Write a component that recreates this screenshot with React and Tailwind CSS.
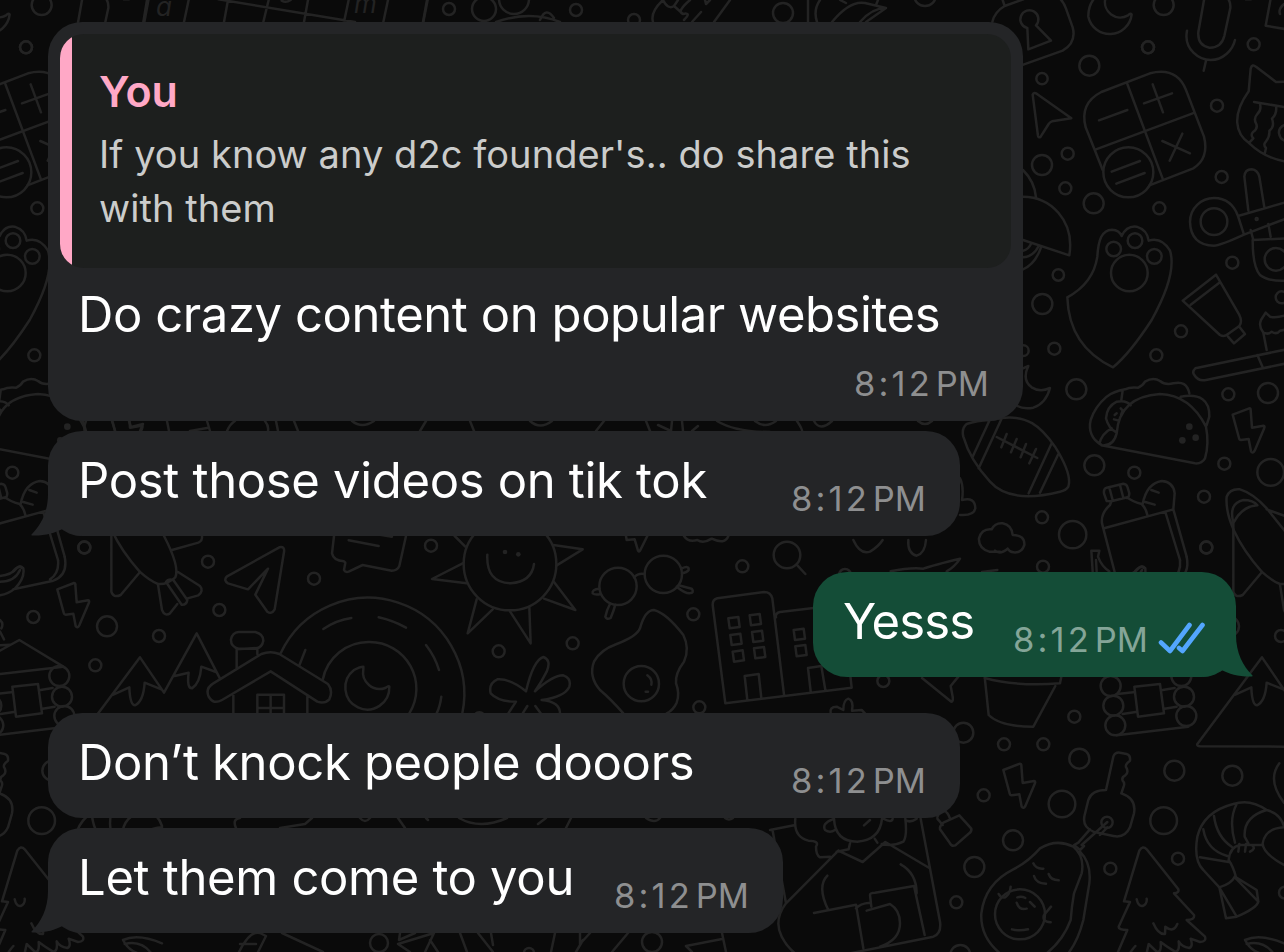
import clsx from 'clsx';

// Wallpaper repeats horizontally every 1122px
const TILE = 1122;

// Each sheet is a block of line drawings on a 3x grid, placed at (x, y)
const sheets = [
  {
    x: 0,
    y: 0,
    circles: [[78, 142, 18]],
    paths: [
      'M566 0L552 66M684 0L672 66M806 0L790 66M924 0L912 66M1046 0L1032 66M1164 0L1150 66M1283 0L1270 66M655 -2L1065 66',
      'M845 2Q858 10 872 0M372 -2L386 -2',
    ],
  },
  {
    x: 960,
    y: 0,
    circles: [
      [611, 15, 30], [564, 142, 18], [388, 197, 30], [246, 236, 17], [881, 133, 18], [771, 317, 18],
      [323, 461, 18], [246, 495, 30], [316, 565, 18], [401, 610, 30], [598, 625, 18], [785, 531, 18],
      [295, 825, 17], [247, 912, 30], [817, 788, 18], [965, 892, 18],
      // calculator, paw and wrench
      [505, 517, 75], [525, 722, 22], [461, 747, 22], [583, 769, 22], [508, 819, 55], [762, 665, 40], [948, 778, 34], [890, 657, 3],
    ],
    paths: [
      'M97 66Q104 35 134 18L190 -2M134 18L128 0M300 -4Q312 8 318 26L338 82Q350 128 308 152L190 194',
      'M202 84L205 148L273 122L228 76M202 84A27 27 0 1 1 228 76',
      'M402 -4Q384 20 385 50A66 66 0 0 0 515 44Q514 38 504 46A46 46 0 0 1 436 -4',
      'M732 0L715 96Q712 136 748 143Q784 144 793 108L811 24Q812 6 804 -4M681 92C670 150 720 180 752 180C790 180 818 150 825 120M738 182L731 212',
      'M932 -4L917 77L980 88',
      'M218 284Q222 276 230 281L334 355L276 364Q270 366 266 372L242 410Q236 415 234 408Z',
      'M428 510L377 382Q358 310 424 276L570 220Q650 200 678 270L732 410Q748 475 700 505L568 556M502 252L608 536M408 448L698 340M417 361L502 330M552 310L636 280M578 253L609 337M607 423L690 460M667 401L629 482M455 515L540 483M469 551L554 519',
      'M189 510Q224 545 228 592M189 590C270 590 345 660 328 766L189 720M243 742Q226 792 189 808M214 730Q205 750 189 752M236 738Q220 770 189 772',
      'M322 892Q400 850 412 770C415 720 425 690 456 689Q478 690 485 708Q500 676 530 680Q562 690 566 722Q605 710 630 752C645 800 625 870 575 960Q510 1060 459 1102C370 1060 325 990 322 892',
      'M980 245L948 246L888 200Q876 190 872 206L866 274C815 345 825 400 868 430Q915 475 980 485M882 306L980 322M900 312Q905 330 892 342Q880 355 888 370Q895 385 880 395Q870 405 880 415L868 428M948 318Q952 340 936 356Q945 380 928 392Q930 410 918 424Q908 435 918 444L914 462M980 372Q955 380 957 400Q960 420 980 424',
      'M865 632L853 530Q855 508 875 508Q893 510 898 530L913 622M980 606L834 648L852 704L980 655M834 648Q815 595 762 594A72 72 0 0 0 690 665Q692 735 762 737Q780 737 852 704M925 672L932 710M872 690L880 720L980 715M878 720Q878 800 900 825Q925 845 980 842',
      'M668 902L768 824L838 945Q848 965 838 978L803 1003Q792 1012 780 1005ZM692 914L778 848M804 1010L822 1030L855 1002L838 980',
    ],
  },
  {
    x: 960,
    y: 300,
    circles: [
      [663, 94, 18], [283, 146, 18], [190, 152, 16], [589, 166, 18], [349, 268, 30], [805, 283, 18],
      [924, 279, 30], [403, 496, 30], [523, 518, 18], [793, 491, 18], [932, 517, 40], [732, 590, 18],
      [246, 652, 18], [338, 704, 41], [739, 743, 18], [249, 800, 18],
    ],
    dots: [[688, 380, 10], [667, 421, 10], [707, 413, 10]],
    paths: [
      'M980 148L706 205Q695 215 703 225Q715 245 738 240L980 190M892 165L908 202M920 150L910 98Q895 80 903 60L917 38L930 50Q950 55 980 45M910 98Q925 105 935 95Q950 105 960 92L980 88',
      'M189 205L205 198Q185 240 215 262Q240 278 270 264Q258 310 220 323Q190 328 172 318',
      'M90 360L124 354C200 345 240 375 285 440C310 480 335 530 325 560Q318 572 300 575C200 600 130 590 90 545Q30 480 10 410Q4 385 20 372Q50 362 90 360M88 362L38 470M124 358L56 505M274 432L206 580M294 464L240 578M110 411L232 474M140 402L124 442M170 417L153 457M198 432L182 472M228 447L208 490',
      'M424 434C395 420 385 390 392 360Q405 320 440 290Q460 275 495 268Q510 260 535 263Q550 255 555 245Q580 230 600 243Q615 256 640 250Q680 240 688 280M488 272L484 300M470 400Q478 290 600 282Q690 285 738 380Q748 430 735 475Q725 492 705 490L424 436Q460 440 470 400M662 290Q750 275 748 350L740 375M512 316Q500 300 470 305Q440 320 438 355Q445 385 470 398M455 385Q425 400 418 432M464 345L470 340M482 325L488 332L483 345M462 358L476 362',
      'M818 344L868 325Q872 325 872 330L876 383L910 377Q916 378 912 386L884 452Q878 462 873 454L866 417L843 420Q838 420 837 414Z',
      'M120 755Q100 755 88 755Q55 745 57 715Q65 685 95 688Q105 668 128 670Q155 675 158 705Q195 705 193 735Q185 760 160 757Q150 757 143 746Q120 765 105 752',
      'M464 816L426 670Q422 640 450 615L454 604L502 592Q515 604 545 612Q558 625 562 645M435 684L640 628M454 604L440 603L432 580Q430 566 440 563L490 551Q500 552 502 560L508 580Q508 592 500 594M448 563L458 600M480 555L490 594M548 612Q560 550 605 543Q640 545 644 580L640 628L680 770M616 636L660 780M574 570L596 578M556 606L584 614',
      'M394 752L418 752L414 770Q425 800 448 814M394 752L398 814M408 780L410 814M525 814Q540 795 552 804',
      'M0 535Q12 560 6 600M6 600Q45 590 46 625Q42 648 0 645M66 816L112 810',
      'M800 590Q810 565 840 568Q880 580 920 625L980 700M800 590C795 650 830 730 905 815M820 668Q805 610 850 600Q880 600 892 616Q845 620 822 666M920 628L980 650',
    ],
  },
  {
    x: 0,
    y: 520,
    circles: [
      [253, 82, 18], [624, 125, 18], [942, 176, 18], [100, 291, 18], [658, 270, 18], [321, 319, 30],
      [477, 348, 18], [286, 436, 18],
    ],
    paths: [
      'M174 120Q178 160 150 178M194 110Q205 165 160 182L40 208M0 168Q35 165 50 145Q60 132 70 145Q75 175 45 205Q25 222 0 226M0 185Q45 185 60 150',
      'M172 208L222 189Q226 189 226 194L230 247L264 241Q270 242 266 250L238 316Q232 326 227 318L220 281L197 284Q192 284 191 278Z',
      'M334 8L334 215Q340 235 362 225L420 156M419 155Q450 183 474 192Q500 195 526 172Q540 140 492 48M516 90L595 68Q608 62 606 48M474 194L486 270Q494 290 510 280L532 252M534 156L600 198Q612 212 595 226L560 236M498 186Q505 175 520 180L562 240Q560 255 545 254Z',
      'M680 170L838 82Q855 78 852 96L824 268Q815 284 802 275L766 224L804 146L744 208L684 190Q670 182 680 170',
      'M1002 48L996 100Q1000 122 1032 124L1036 128L1032 150Q1036 158 1046 155L1088 135L1175 152Q1192 152 1198 138L1218 48M1046 61L1136 78M1140 44L1176 50',
      'M842 400A289 289 0 0 1 1387 580M968 480A140 140 0 0 1 1108 366A140 140 0 0 1 1228 580M970 327Q1010 300 1054 294M1136 292Q1180 302 1218 323M916 390L898 436M1278 375Q1305 410 1317 450M1324 530Q1320 560 1310 580',
      'M1090 440Q1080 440 1062 450A66 66 0 1 0 1168 500Q1166 496 1156 504A50 50 0 0 1 1090 448Z',
      'M666 540Q640 555 626 530Q615 505 640 490L784 402Q812 392 838 402L984 492Q1000 512 988 538Q975 552 952 545L812 454ZM700 525L700 580M922 530L922 580M710 445L710 388L772 384L772 402M716 386Q692 380 693 358Q697 338 716 336L766 336Q790 342 790 362Q786 384 766 386ZM772 580L772 524L852 524L852 580M812 524L812 580M772 564L852 564',
      'M500 680L234 679Q224 678 226 672L420 412L492 518L590 340L660 476M340 524L388 502Q390 555 405 556Q430 545 434 488L484 508M524 468L566 458Q560 505 576 505Q600 490 604 440L648 456',
      'M-60 425L58 360L190 440M0 462L190 440M0 376L30 374M0 300Q12 310 4 325M0 335L12 358',
    ],
  },
  {
    x: 410,
    y: 520,
    circles: [
      [63, 77, 18], [997, 139, 18], [850, 283, 18], [266, 394, 18], [488, 370, 18], [868, 562, 18],
      [300, 132, 139], [1131, 105, 40], [624, 199, 56], [760, 163, 56], [694, 491, 53], [208, 595, 18],
    ],
    dots: [[285, 96, 7], [325, 103, 7]],
    paths: [
      'M134 48L166 80M430 75L518 88L440 136M158 130L66 177L170 190M432 186L496 270L402 236M200 238L173 340L248 268M300 274L362 370L358 262M232 104Q228 188 302 190Q365 185 372 132',
      'M648 48L650 60L674 58L684 92Q687 98 692 88L712 48M822 48Q835 68 862 60Q880 72 905 56Q945 75 955 48M1160 134L1186 162',
      'M672 172Q685 158 704 162M814 146Q838 135 836 150Q830 158 816 160M806 196L845 206Q855 218 838 220Q825 220 800 200M568 206Q545 208 548 220Q555 226 572 222M600 252Q590 270 586 290Q590 300 602 294Q612 270 616 254',
      'M640 580Q600 535 570 510Q535 470 552 425Q570 390 620 372Q680 350 690 325Q705 270 732 270Q770 280 820 345Q840 385 822 425Q795 460 798 490Q810 520 800 548Q790 570 770 580M712 466Q728 478 724 494M707 515L714 515',
      'M348 514Q370 420 400 411Q425 420 410 455Q395 485 375 514Q430 465 460 466Q485 475 478 500Q465 530 395 540Q450 545 450 580M348 514Q300 475 262 478Q235 490 242 520Q265 545 318 545L295 580M352 558L338 580M376 558L392 580',
      'M946 550L908 255Q908 238 922 235L1062 216Q1082 216 1087 235L1122 524M946 550L1325 503L1318 440M1098 292Q1095 280 1110 276L1230 262M1012 540L1004 468L1046 462L1054 534M1202 514L1194 444L1234 438L1246 510',
      'M955 295L985 291L989 321L959 325ZM1019 286L1049 282L1053 312L1023 316ZM961 345L991 341L995 371L965 375ZM1026 336L1056 332L1060 362L1030 366ZM968 395L998 391L1002 421L972 425ZM1032 385L1062 381L1066 411L1036 415ZM1151 330L1181 326L1185 356L1155 360ZM1156 379L1186 375L1190 405L1160 409Z',
    ],
  },
  {
    x: 800,
    y: 540,
    circles: [
      [135, 105, 18], [250, 423, 18], [823, 530, 18], [612, 613, 18], [730, 613, 18], [490, 578, 30],
      [932, 438, 30], [940, 497, 30], [946, 556, 30], [1144, 408, 30], [1152, 470, 30], [1159, 528, 30],
    ],
    paths: [
      'M160 0Q180 45 210 35Q235 20 248 0M325 0Q322 40 350 47Q375 40 378 0M272 94Q330 82 370 86Q400 75 480 56Q465 80 440 94',
      'M952 462L1000 457M1088 450L1124 444M968 522L1012 515M1094 506L1130 500M950 586L1165 560M1003 440L1080 432L1092 520L1014 530Z',
      'M366 414L454 485Q460 485 458 470L452 438L475 410M554 410L566 525Q600 560 700 560L766 438M554 414Q650 440 780 430L784 410',
      'M92 520Q88 500 110 500L130 510Q130 480 145 476Q162 482 156 512L185 510L195 520',
    ],
  },
  {
    x: 770,
    y: 740,
    circles: [
      [928, 56, 30], [641, 166, 18], [876, 192, 40], [1213, 92, 30], [1387, 107, 30], [1181, 242, 40],
      [729, 301, 30], [613, 381, 30], [559, 487, 18], [1021, 386, 18], [1224, 356, 18], [571, 645, 30],
      [1545, 458, 18], [1011, 247, 17], [750, 523, 75],
    ],
    paths: [
      'M700 90L750 71Q754 71 754 76L758 129L792 123Q798 124 794 132L766 198Q760 208 755 200L748 163L725 166Q720 166 719 160Z',
      'M1008 150L1030 50Q1035 36 1050 38L1070 42Q1082 46 1080 62Q1062 75 1070 85Q1076 98 1066 106Q1054 112 1058 122Q1066 130 1060 142L1054 160Q1100 175 1092 220L1080 262Q1065 295 1030 288L970 275Q935 260 944 225L955 180Q965 150 1008 150M1012 246L935 315M960 268L925 308L912 315L930 330L942 318M1012 262L990 285',
      'M690 640Q630 590 634 520Q645 430 730 388Q775 365 810 325Q860 295 910 320Q945 350 935 400L912 460Q905 500 902 540Q880 600 830 640M930 335Q965 370 958 430L940 540Q925 600 895 640M790 370Q798 388 820 386M792 408Q798 430 828 431M836 402Q842 420 866 421M686 462Q692 475 706 472Q720 462 722 440M742 472Q755 468 766 474M740 488Q748 512 770 506M780 486L794 500M843 500L822 525Q815 545 842 547M726 568Q748 574 774 568',
      'M1062 484L1108 332Q1118 315 1130 328L1224 446Q1230 458 1212 460L1272 525Q1275 540 1250 540L1305 590Q1310 605 1290 606L1262 596Q1270 620 1258 624Q1235 620 1226 604Q1230 635 1215 635Q1190 620 1172 606Q1175 640 1160 635L1136 612L1130 640M1096 618Q1085 630 1080 640M1062 484L1080 486L1046 560Q1045 570 1072 570L1044 636M1100 478Q1105 500 1118 498Q1132 492 1130 476M1150 550Q1165 585 1185 582L1186 560Q1210 580 1222 552',
      'M1542 258Q1530 220 1490 210Q1440 175 1390 192Q1300 215 1282 290Q1270 360 1300 390L1348 442L1368 535L1400 530Q1460 505 1465 485L1460 450L1398 412Q1390 380 1376 360Q1380 320 1410 315L1478 315M1542 375Q1478 340 1478 310Q1485 265 1542 262M1290 352L1376 366M1348 442Q1385 430 1394 410M1350 446L1400 530M1396 414L1465 485M1300 268Q1310 330 1372 348M1332 228Q1340 290 1385 320M1400 192Q1375 240 1395 308M1490 210Q1420 230 1424 290L1435 310M1408 312L1405 335M1428 312L1425 335M1445 315Q1460 325 1440 335M1528 70Q1490 120 1542 188',
      'M1425 600Q1470 580 1542 610M1425 600Q1440 630 1470 640M1430 612Q1480 600 1510 640',
      'M76 236Q70 290 115 302Q150 302 138 320Q138 345 150 352L180 350M188 238Q155 250 165 270Q180 280 195 270M192 236Q195 305 262 305Q330 300 336 236M340 236Q365 250 368 236M406 236Q412 290 400 305Q370 320 335 312M300 240L282 256M240 310L236 328L200 335M314 296L322 308M406 240Q420 250 440 236M205 332L278 366L346 306L478 384M205 332L48 490Q10 540 35 590Q50 620 75 640M452 236L510 545Q515 580 490 590L240 640M172 407Q140 440 175 510M132 519L258 494L280 625M258 505Q270 490 300 488M304 500L300 465Q300 458 315 458L432 438L464 585M392 373Q440 400 440 460M290 512L360 492Q390 510 390 550Q390 600 330 620M0 270L76 255M8 272L48 490',
      'M502 232Q505 215 522 212Q535 218 540 236M502 236L518 255M510 268Q508 258 520 248L568 226L604 266Q606 275 595 282L556 316Q545 320 540 310Z',
    ],
  },
];

// Slivers that show between the bubbles, in page pixels
const slivers = [
  'M427 0L423 22M496 22Q530 10 560 22M540 20Q546 6 554 18M663 0Q650 12 653 22M663 0Q668 10 674 6L678 0M674 6L683 14M690 0Q676 12 683 14Q692 12 684 20M701 12L692 22M705 0L706 4L710 0M730 0L714 22M808 0L808 22M820 0Q813 10 817 22M840 0L846 3M832 22Q850 0 865 3L886 8L866 22M886 8Q872 8 860 22M876 5L878 0',
  'M147 0L143 24M1284 4Q1278 9 1280 14',
  'M83 421L86 431M112 421L115 431M129 421L131 427L143 424L140 431M167 421L169 431M207 421L210 431M190 431L207 428M227 431Q230 424 235 421M265 421Q269 426 268 431M276 421L278 431M294 421L298 431M352 421Q362 429 374 421M420 431L426 421M470 421L474 431M530 421Q540 430 552 421M596 431L604 421',
  'M646 421L650 431M658 425L671 431M672 421L671 431M682 421L683 431M692 431L698 426M717 421Q735 432 770 432M755 421Q765 429 776 421M797 421Q803 430 802 432M814 421Q820 432 832 421M918 421Q925 427 932 421',
  'M236 828Q232 819 240 818M280 828L305 824L312 818M398 818L405 828M426 818L428 820M459 818Q480 830 507 818M538 824L546 818M571 818L566 828M360 818Q365 824 370 818M646 818Q655 824 660 818M725 818Q729 821 733 818',
  'M239 952Q250 930 260 933L266 936L258 952M240 944L256 944M282 933L323 952M400 933L399 940L415 933M410 952L398 944L434 933L425 952M430 940L438 952M460 933L467 952M478 933L493 952M491 933L493 945M555 933L551 952M580 933L580 944L590 933M576 952L583 940M628 933L612 952M722 933L726 952M686 946L722 939M686 946L692 952',
];

const sliverCircles = [
  [449, 9, 6], [484, 9, 12], [514, -1, 15], [576, 10, 6], [634, 20, 6], [783, 13, 10], [925, -5, 11],
  [379, 943, 9], [652, 942, 10], [529, 953, 5],
];

function Sheet({ sheet }) {
  return (
    <g transform={`translate(${sheet.x} ${sheet.y}) scale(0.33333)`} strokeWidth="7.5">
      {sheet.paths.map((d) => (
        <path key={d} d={d} />
      ))}
      {sheet.circles.map(([cx, cy, r]) => (
        <circle key={`${cx}-${cy}`} cx={cx} cy={cy} r={r} />
      ))}
      {sheet.dots?.map(([cx, cy, r]) => (
        <circle key={`${cx}-${cy}`} cx={cx} cy={cy} r={r} fill="#232323" stroke="none" />
      ))}
    </g>
  );
}

function Wallpaper() {
  return (
    <svg
      className="absolute inset-0"
      width="1284"
      height="952"
      viewBox="0 0 1284 952"
      fill="none"
      stroke="#232323"
      strokeLinecap="round"
      strokeLinejoin="round"
      aria-hidden="true"
    >
      {[-TILE, 0, TILE].map((offset) => (
        <g key={offset} transform={`translate(${offset} 0)`}>
          {sheets.map((sheet) => (
            <Sheet key={`${sheet.x}-${sheet.y}`} sheet={sheet} />
          ))}
        </g>
      ))}
      {/* letter tiles */}
      <g fill="#232323" stroke="none" fontFamily="Inter, sans-serif" fontStyle="italic" fontSize="26">
        <text x="156" y="16">a</text>
        <text x="354" y="13">m</text>
      </g>
      <g strokeWidth="2.5">
        {slivers.map((d) => (
          <path key={d} d={d} />
        ))}
        {sliverCircles.map(([cx, cy, r]) => (
          <circle key={`${cx}-${cy}`} cx={cx} cy={cy} r={r} />
        ))}
      </g>
    </svg>
  );
}

function Tail({ own }) {
  return (
    <svg
      className={clsx('absolute bottom-0', own ? '-right-[17px] -scale-x-100 text-[#144d37]' : '-left-[17px] text-[#242527]')}
      width="52"
      height="50"
      viewBox="0 0 52 50"
      fill="currentColor"
      aria-hidden="true"
    >
      <path d="M17 0V8C17 26 10 39 0.5 48.5Q0 49.5 1.5 49.5C13 50 24 47 31.5 43Q40 49 50 50V0Z" />
    </svg>
  );
}

function Ticks() {
  return (
    <svg
      className="mb-[6px] ml-[10px] shrink-0"
      width="48"
      height="32"
      viewBox="0 0 48 32"
      fill="none"
      stroke="#53a6fd"
      strokeWidth="4.6"
      strokeLinecap="round"
      strokeLinejoin="round"
      aria-hidden="true"
    >
      <path d="M3 20.500L12 29L31.500 3M21 26L24.500 29L44.500 3" />
    </svg>
  );
}

function Time({ own }) {
  return (
    <span
      className={clsx(
        'flex shrink-0 gap-[3px] text-[34.5px] leading-[40px]',
        own ? 'text-[#84a598]' : 'text-[#8e8f90]'
      )}
    >
      <span className="tracking-[3.1px]">8:12</span>
      <span>PM</span>
    </span>
  );
}

function Bubble({ text, width, tail, own, className, textClass = 'tracking-[-0.33px]' }) {
  return (
    <div
      className={clsx(
        'relative flex h-[105px] items-end justify-between rounded-[34px] pb-[17px] pl-[30px]',
        own ? 'mr-[48px] self-end bg-[#144d37] pr-[30px]' : 'ml-[48px] bg-[#242527] pr-[34px]',
        width,
        className
      )}
    >
      {tail && <Tail own={own} />}
      <p className={clsx('relative mb-[8px] text-[49px] leading-[60px] whitespace-nowrap text-white', textClass)}>{text}</p>
      <div className="relative flex items-end">
        <Time own={own} />
        {own && <Ticks />}
      </div>
    </div>
  );
}

export default function App() {
  return (
    <div className="relative h-[952px] w-[1284px] overflow-hidden bg-[#0a0a0a] font-['Inter',sans-serif]">
      <Wallpaper />

      <main className="relative flex flex-col items-start pt-[22px]">
        {/* Reply with quoted message */}
        <div className="ml-[48px] flex h-[399px] w-[975px] flex-col rounded-[34px] bg-[#242527] p-[12px]">
          <div className="flex h-[234px] shrink-0 overflow-hidden rounded-[24px] bg-[#1d1f1e]">
            <div className="w-[12px] shrink-0 bg-[#ffa8c6]" />
            <div className="pt-[30px] pl-[27px]">
              <p className="text-[43px] leading-[54px] font-semibold text-[#ffa8c6]">You</p>
              <p className="mt-[9px] text-[38px] leading-[54px] tracking-[0.07px] whitespace-nowrap text-[#cbcccb]">
                If you know any d2c founder's.. do share this
                <br />
                with them
              </p>
            </div>
          </div>
          <p className="mt-[17px] ml-[18px] text-[49px] leading-[60px] tracking-[-0.43px] whitespace-nowrap text-white">
            Do crazy content on popular websites
          </p>
          <div className="mt-auto mr-[22px] mb-[5px] self-end">
            <Time />
          </div>
        </div>

        <Bubble className="mt-[10px]" width="w-[912px]" text="Post those videos on tik tok" tail />
        <Bubble className="mt-[36px]" width="w-[423px]" text="Yesss" textClass="tracking-[-0.9px]" own tail />
        <Bubble className="mt-[36px]" width="w-[912px]" text="Don’t knock people dooors" />
        <Bubble className="mt-[10px]" width="w-[735px]" text="Let them come to you" tail />
      </main>
    </div>
  );
}
